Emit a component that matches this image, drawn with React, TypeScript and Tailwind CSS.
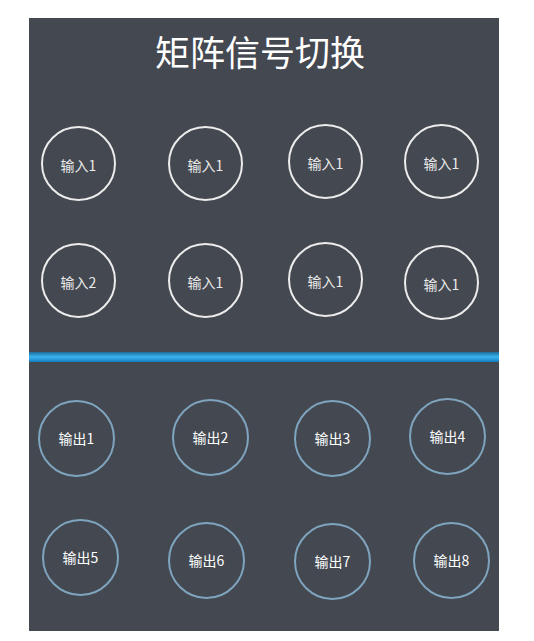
const font = { fontFamily: '"Noto Sans CJK SC", "Noto Sans", sans-serif' }

type Port = { label: string; cls: string }

// 输入端口，两行
const inputRows: Port[][] = [
  [
    { label: '输入1', cls: 'ml-[12px] mt-[2px]' },
    { label: '输入1', cls: 'ml-[52px] mt-[2px]' },
    { label: '输入1', cls: 'ml-[45px] mt-[0px]' },
    { label: '输入1', cls: 'ml-[41px] mt-[0px]' },
  ],
  [
    { label: '输入2', cls: 'ml-[12px] mt-[1px]' },
    { label: '输入1', cls: 'ml-[52px] mt-[1px]' },
    { label: '输入1', cls: 'ml-[45px] mt-[0px]' },
    { label: '输入1', cls: 'ml-[41px] mt-[3px]' },
  ],
]

// 输出端口，两行
const outputRows: Port[][] = [
  [
    { label: '输出1', cls: 'ml-[9px] mt-[2px]' },
    { label: '输出2', cls: 'ml-[57px] mt-[1px]' },
    { label: '输出3', cls: 'ml-[45px] mt-[2px]' },
    { label: '输出4', cls: 'ml-[38px] mt-[0px]' },
  ],
  [
    { label: '输出5', cls: 'ml-[13px] mt-[0px]' },
    { label: '输出6', cls: 'ml-[49px] mt-[3px]' },
    { label: '输出7', cls: 'ml-[49px] mt-[4px]' },
    { label: '输出8', cls: 'ml-[42px] mt-[3px]' },
  ],
]

function InputPort({ label, cls }: Port) {
  return (
    <div
      className={`${cls} w-[75px] h-[75px] shrink-0 rounded-full border-2 border-[#ececec] flex items-center justify-center text-[14px] text-[#ebebeb] pt-[4px]`}
    >
      {label}
    </div>
  )
}

function OutputPort({ label, cls }: Port) {
  return (
    <div
      className={`${cls} w-[77px] h-[77px] shrink-0 rounded-full border-2 border-[#7fa4be] flex items-center justify-center text-[14px] text-white`}
    >
      {label}
    </div>
  )
}

export default function App() {
  return (
    <div className="w-[534px] h-[641px] bg-white pt-[18px]" style={font}>
      <div className="ml-[29px] w-[470px] h-[613px] bg-[#444851] flex flex-col">
        <div className="pt-[13px] pr-[8px] h-[55px] text-center text-[35px] leading-[40px] text-white">
          矩阵信号切换
        </div>

        <div className="mt-[51px] h-[80px] flex items-start">
          {inputRows[0].map((p, i) => (
            <InputPort key={i} {...p} />
          ))}
        </div>
        <div className="mt-[38px] h-[80px] flex items-start">
          {inputRows[1].map((p, i) => (
            <InputPort key={i} {...p} />
          ))}
        </div>

        {/* 分隔线 */}
        <div className="mt-[30px] h-[10px] bg-gradient-to-b from-[#1d6f99] via-[#3bb4f2] to-[#137cbb]" />

        <div className="mt-[36px] h-[80px] flex items-start">
          {outputRows[0].map((p, i) => (
            <OutputPort key={i} {...p} />
          ))}
        </div>
        <div className="mt-[41px] h-[80px] flex items-start">
          {outputRows[1].map((p, i) => (
            <OutputPort key={i} {...p} />
          ))}
        </div>
      </div>
    </div>
  )
}
